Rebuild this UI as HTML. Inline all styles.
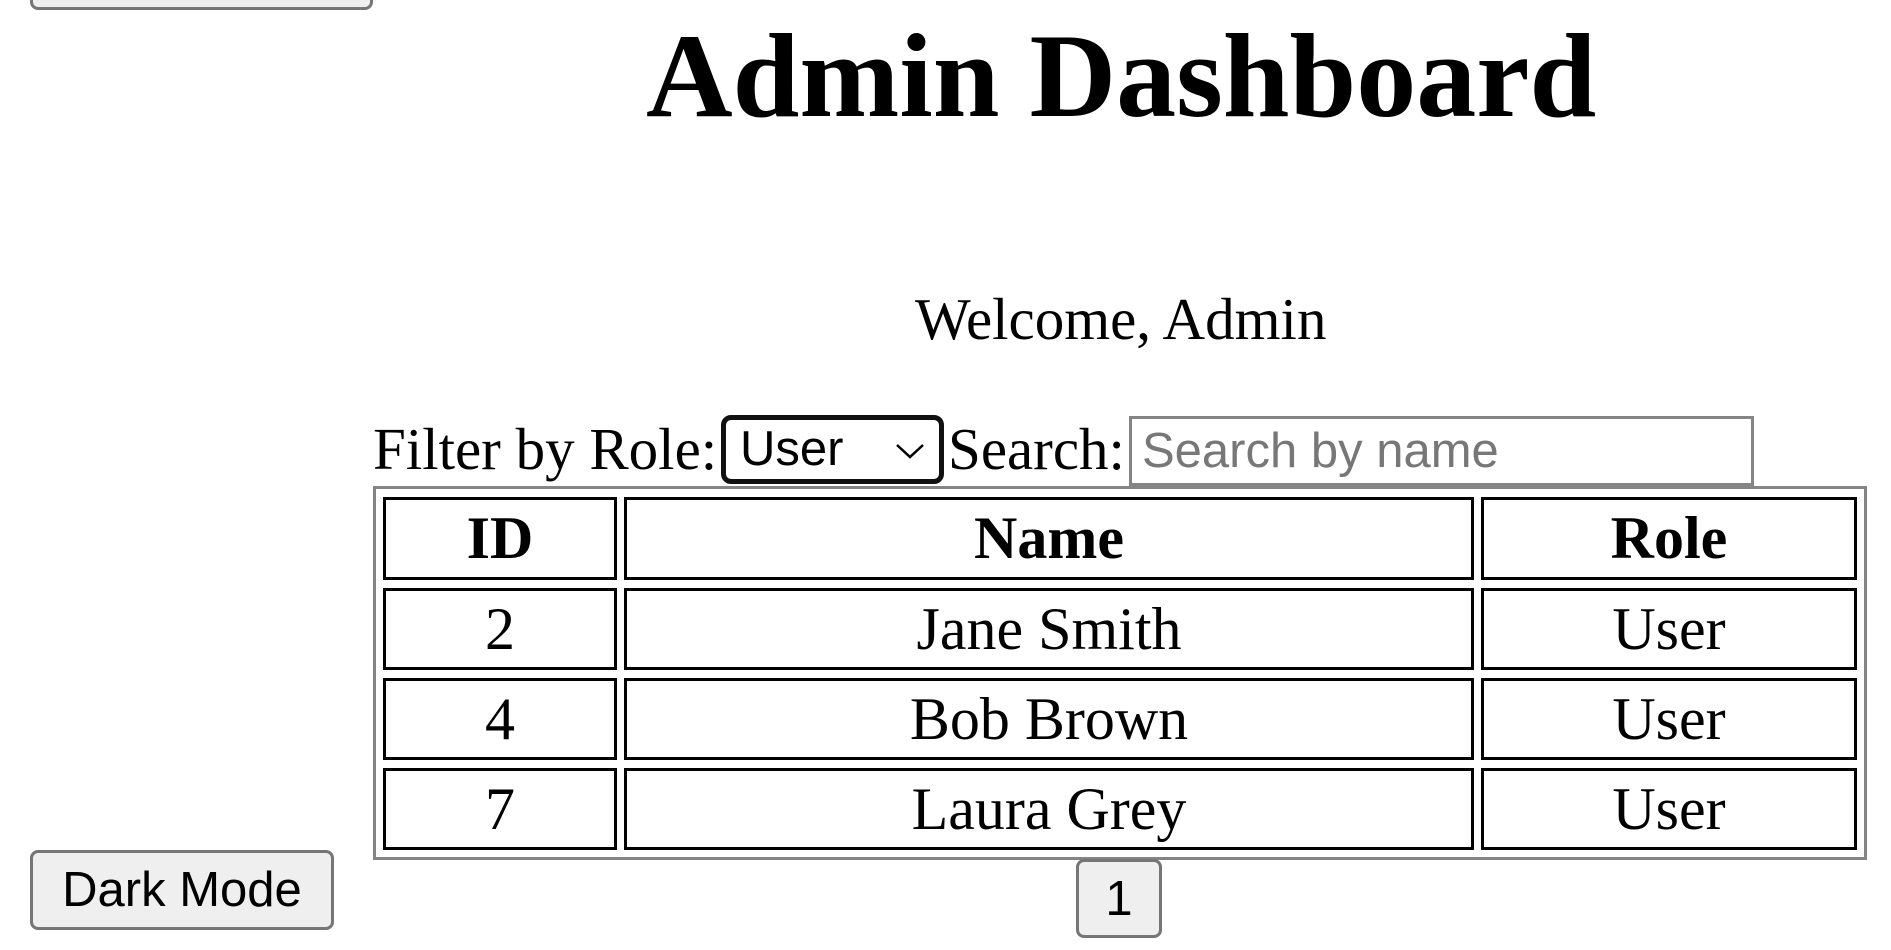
<!DOCTYPE html>
<html><head><meta charset="utf-8"><style>
*{margin:0;padding:0;box-sizing:border-box}
body{width:1891px;height:950px;background:#fff;position:relative;overflow:hidden;font-family:"Liberation Serif",serif;color:#000}
.a{position:absolute;white-space:nowrap;line-height:1}
.btn{position:absolute;background:#efefef;border:3px solid #767676;border-radius:8px;font-family:"Liberation Sans",sans-serif;font-size:49px;display:flex;align-items:center;justify-content:center}
.cell{position:absolute;border:3px solid #000;display:flex;align-items:center;justify-content:center;font-size:60px}
.h{font-weight:bold}
</style></head><body>
<div class="btn" style="left:30px;top:-70px;width:343px;height:80px"></div>
<div class="a" style="left:646px;top:16px;font-size:120px;font-weight:bold">Admin Dashboard</div>
<div class="a" style="left:915px;top:290px;font-size:59px">Welcome, Admin</div>
<div class="a" style="left:373px;top:420px;font-size:59px">Filter by Role:</div>
<div class="a" style="left:721px;top:415px;width:223px;height:69px;border:5px solid #111;border-radius:10px;font-family:'Liberation Sans',sans-serif;font-size:49px;padding-left:14px;display:flex;align-items:center">User
<svg style="position:absolute;right:14px;top:22px" width="30" height="18" viewBox="0 0 30 18"><path d="M2 3 L15 15 L28 3" fill="none" stroke="#000" stroke-width="2.5"/></svg></div>
<div class="a" style="left:948px;top:420px;font-size:59px">Search:</div>
<div class="a" style="left:1129px;top:416px;width:625px;height:70px;border:3px solid #858585;font-family:'Liberation Sans',sans-serif;font-size:49px;color:#777;padding-left:10px;display:flex;align-items:center">Search by name</div>
<div class="a" style="left:373px;top:486px;width:1494px;height:374px;border:3px solid #858585"></div>
<div class="cell h" style="left:383px;top:497px;width:234px;height:83px">ID</div>
<div class="cell h" style="left:624px;top:497px;width:850px;height:83px">Name</div>
<div class="cell h" style="left:1481px;top:497px;width:376px;height:83px">Role</div>
<div class="cell" style="left:383px;top:588px;width:234px;height:82px">2</div>
<div class="cell" style="left:624px;top:588px;width:850px;height:82px">Jane Smith</div>
<div class="cell" style="left:1481px;top:588px;width:376px;height:82px">User</div>
<div class="cell" style="left:383px;top:678px;width:234px;height:82px">4</div>
<div class="cell" style="left:624px;top:678px;width:850px;height:82px">Bob Brown</div>
<div class="cell" style="left:1481px;top:678px;width:376px;height:82px">User</div>
<div class="cell" style="left:383px;top:768px;width:234px;height:82px">7</div>
<div class="cell" style="left:624px;top:768px;width:850px;height:82px">Laura Grey</div>
<div class="cell" style="left:1481px;top:768px;width:376px;height:82px">User</div>
<div class="btn" style="left:30px;top:850px;width:304px;height:80px">Dark Mode</div>
<div class="btn" style="left:1076px;top:859px;width:86px;height:79px">1</div>
</body></html>
